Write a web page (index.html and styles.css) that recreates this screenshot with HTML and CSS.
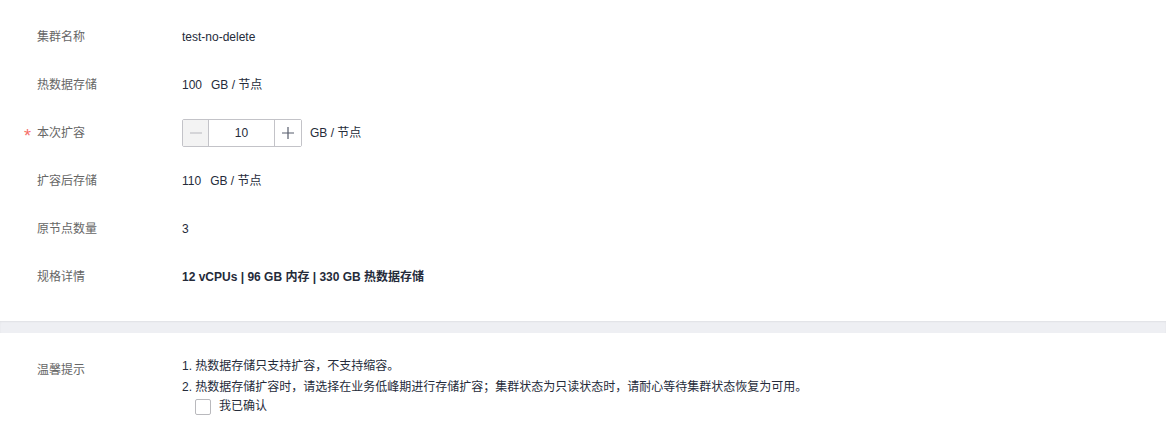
FILE: index.html
```html
<!DOCTYPE html>
<html lang="zh-CN">
<head>
<meta charset="utf-8">
<link rel="stylesheet" href="styles.css">
</head>
<body>
<div class="page">
  <section class="form">
    <div class="row">
      <div class="label">集群名称</div>
      <div class="value">test-no-delete</div>
    </div>
    <div class="row">
      <div class="label">热数据存储</div>
      <div class="value"><span>100</span><span class="unit">GB / 节点</span></div>
    </div>
    <div class="row">
      <div class="label required">本次扩容</div>
      <div class="value">
        <div class="stepper">
          <button class="step minus" type="button" aria-label="minus">
            <svg width="14" height="14" viewBox="0 0 14 14"><path d="M1 7h12" stroke="#c2c2c6" stroke-width="1.2" fill="none"/></svg>
          </button>
          <div class="step-input">10</div>
          <button class="step plus" type="button" aria-label="plus">
            <svg width="14" height="14" viewBox="0 0 14 14"><path d="M1 7h12M7 1v12" stroke="#575d6c" stroke-width="1.2" fill="none"/></svg>
          </button>
        </div>
        <span class="unit-after">GB / 节点</span>
      </div>
    </div>
    <div class="row">
      <div class="label">扩容后存储</div>
      <div class="value"><span>110</span><span class="unit">GB / 节点</span></div>
    </div>
    <div class="row">
      <div class="label">原节点数量</div>
      <div class="value">3</div>
    </div>
    <div class="row">
      <div class="label">规格详情</div>
      <div class="value bold">12 vCPUs | 96 GB 内存 | 330 GB 热数据存储</div>
    </div>
  </section>
  <div class="band"></div>
  <section class="tips">
    <div class="label tips-label">温馨提示</div>
    <div class="tips-body">
      <p class="tip">1. 热数据存储只支持扩容，不支持缩容。</p>
      <p class="tip">2. 热数据存储扩容时，请选择在业务低峰期进行存储扩容；集群状态为只读状态时，请耐心等待集群状态恢复为可用。</p>
      <label class="confirm"><span class="box"></span><span>我已确认</span></label>
    </div>
  </section>
</div>
</body>
</html>
```

FILE: styles.css
```css
* { box-sizing: border-box; }
html, body { margin: 0; padding: 0; background: #fff; }
body {
  font-family: "Liberation Sans", "Noto Sans CJK SC", sans-serif;
  font-size: 12px;
  color: #252b3a;
}
.page { width: 1166px; }
.form { padding-top: 13px; }
.row {
  display: flex;
  align-items: center;
  height: 48px;
}
.label {
  position: relative;
  width: 182px;
  padding-left: 37px;
  color: #666;
  line-height: 18px;
  flex: none;
}
.label.required::before {
  content: "*";
  position: absolute;
  left: 24px;
  top: 3px;
  color: #f66f6a;
  font-size: 18px;
  line-height: 18px;
}
.value {
  display: flex;
  align-items: center;
  line-height: 18px;
  color: #252b3a;
}
.value.bold { font-weight: bold; }
.unit { margin-left: 9px; }
.stepper {
  display: flex;
  height: 28px;
  width: 120px;
  border: 1px solid #c3c3c8;
  border-radius: 2px;
  background: #fff;
}
.step {
  width: 26px;
  height: 26px;
  padding: 0;
  margin: 0;
  border: 0;
  background: #fff;
  display: flex;
  align-items: center;
  justify-content: center;
  flex: none;
}
.step.minus { background: #f3f3f3; border-right: 1px solid #c3c3c8; width: 26px; }
.step.plus { border-left: 1px solid #c3c3c8; width: 27px; }
.step-input {
  flex: 1;
  text-align: center;
  line-height: 26px;
  color: #252b3a;
}
.unit-after { margin-left: 8px; }
.band {
  margin-top: 20px;
  height: 12px;
  background: #eeeff3;
  box-shadow: inset 0 1px 2px rgba(0, 0, 0, 0.06);
}
.tips {
  display: flex;
  padding-top: 23px;
}
.tips-label { margin-top: 5px; }
.tips-body { flex: 1; }
.tip {
  margin: 0;
  line-height: 21px;
  color: #252b3a;
}
.confirm {
  display: flex;
  align-items: center;
  gap: 8px;
  margin-left: 13px;
  height: 17px;
  color: #252b3a;
  line-height: 17px;
}
.box {
  width: 16px;
  height: 16px;
  border: 1px solid #b9b9bd;
  border-radius: 2px;
  background: #fff;
  flex: none;
}
```
